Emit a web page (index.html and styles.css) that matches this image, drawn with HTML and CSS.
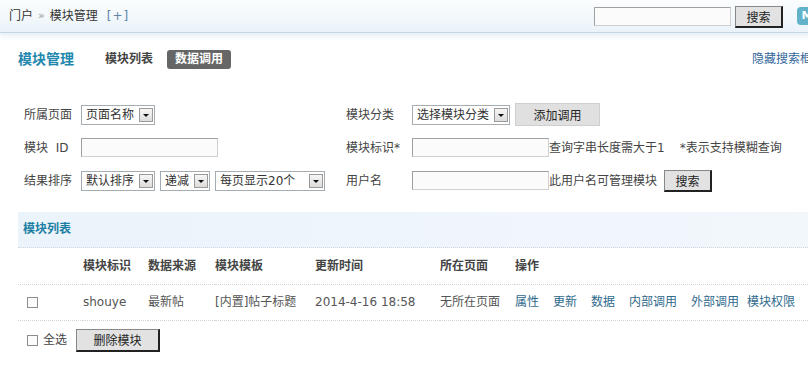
FILE: index.html
```html
<!DOCTYPE html>
<html lang="zh">
<head>
    <meta charset="UTF-8">
    <meta name="viewport" content="width=device-width, initial-scale=1.0">
    <title>模块管理</title>
    <link rel="stylesheet" href="styles.css">
</head>
<body>
    <!-- 顶部导航条 -->
    <div class="topbar">
        <div class="crumb">
            <a href="#">门户</a><em>&raquo;</em><a href="#">模块管理</a><span class="add">[+]</span>
        </div>
        <div class="top-search">
            <input type="text" class="text top-input">
            <button class="btn btn-dark">搜索</button>
            <span class="top-icon">M</span>
        </div>
    </div>

    <div class="main">
        <!-- 标题和标签 -->
        <div class="title-row">
            <h1>模块管理</h1>
            <a class="tab" href="#">模块列表</a>
            <a class="tab current" href="#">数据调用</a>
            <a class="toggle" href="#">隐藏搜索框</a>
        </div>

        <!-- 搜索表单 -->
        <div class="search-form">
            <div class="label">所属页面</div>
            <div class="field">
                <span class="sel w74"><select><option>页面名称</option></select><i class="arrow"></i></span>
            </div>
            <div class="label label-r">模块分类</div>
            <div class="field">
                <span class="sel w98"><select><option>选择模块分类</option></select><i class="arrow"></i></span>
                <button class="btn btn-light">添加调用</button>
            </div>

            <div class="label">模块&nbsp; ID</div>
            <div class="field"><input type="text" class="text"></div>
            <div class="label label-r">模块标识*</div>
            <div class="field">
                <input type="text" class="text"><span class="tip">查询字串长度需大于1</span><span class="hint">*表示支持模糊查询</span>
            </div>

            <div class="label">结果排序</div>
            <div class="field">
                <span class="sel w74"><select><option>默认排序</option></select><i class="arrow"></i></span>
                <span class="sel w50"><select><option>递减</option></select><i class="arrow"></i></span>
                <span class="sel w110"><select><option>每页显示20个</option></select><i class="arrow"></i></span>
            </div>
            <div class="label label-r">用户名</div>
            <div class="field">
                <input type="text" class="text"><span class="tip">此用户名可管理模块</span>
                <button class="btn btn-dark">搜索</button>
            </div>
        </div>

        <!-- 模块列表 -->
        <div class="list-title">模块列表</div>
        <table class="list">
            <tr>
                <th class="c-check"></th>
                <th class="c-name">模块标识</th>
                <th class="c-src">数据来源</th>
                <th class="c-tpl">模块模板</th>
                <th class="c-time">更新时间</th>
                <th class="c-page">所在页面</th>
                <th>操作</th>
            </tr>
            <tr>
                <td class="c-check"><input type="checkbox" class="chk"></td>
                <td class="latin">shouye</td>
                <td>最新帖</td>
                <td>[内置]帖子标题</td>
                <td class="latin">2014-4-16 18:58</td>
                <td>无所在页面</td>
                <td class="ops">
                    <a href="#">属性</a><a href="#">更新</a><a href="#">数据</a><a href="#">内部调用</a><a href="#">外部调用</a><a href="#">模块权限</a>
                </td>
            </tr>
        </table>

        <div class="list-foot">
            <label class="all"><input type="checkbox" class="chk">全选</label>
            <button class="btn btn-dark btn-del">删除模块</button>
        </div>
    </div>
</body>
</html>
```

FILE: styles.css
```css
/* 基础样式 */
* {
    margin: 0;
    padding: 0;
    box-sizing: border-box;
}

body {
    font: 12px/1.5 "DejaVu Sans", "Noto Sans CJK SC", sans-serif;
    color: #444;
    background: #fff;
    overflow: hidden;
}

a {
    text-decoration: none;
    color: #336699;
}

/* 顶部导航条 */
.topbar {
    width: 826px;
    height: 33px;
    padding: 0 9px;
    display: flex;
    align-items: center;
    background: linear-gradient(#fbfdfe, #ebf3f9);
    border-bottom: 1px solid #c3d6e4;
    box-shadow: 0 3px 6px rgba(205, 222, 236, 0.55);
}

.crumb {
    display: flex;
    align-items: center;
    color: #333;
}

.crumb a {
    color: #333;
}

.crumb em {
    font-style: normal;
    color: #999;
    font-size: 11px;
    margin: 0 5px 0 5px;
}

.crumb .add {
    margin-left: 9px;
    color: #6283a6;
    font-family: "DejaVu Sans", sans-serif;
    letter-spacing: 1px;
}

.top-search {
    margin-left: auto;
    display: flex;
    align-items: center;
}

.top-input {
    width: 136px;
    height: 18px;
    background: #f7f7f7;
}

.top-search .btn {
    margin-left: 4px;
    width: 48px;
    height: 22px;
    margin-top: 1px;
}

.top-icon {
    margin-left: 14px;
    width: 20px;
    height: 18px;
    border-radius: 4px;
    background: #62b3c9;
    color: #fff;
    font-weight: bold;
    font-size: 11px;
    line-height: 18px;
    text-align: center;
}

/* 主区域 */
.main {
    width: 830px;
    padding: 0 18px;
}

.title-row {
    height: 20px;
    margin-top: 16px;
    display: flex;
    align-items: center;
}

.title-row h1 {
    font-size: 14px;
    font-weight: bold;
    color: #2187ad;
    line-height: 20px;
}

.tab {
    color: #444;
    font-weight: bold;
    line-height: 19px;
}

.title-row h1 + .tab {
    margin-left: 31px;
}

.tab.current {
    margin-left: 14px;
    padding: 0 8px;
    background: #666;
    color: #fff;
    border-radius: 3px;
}

.toggle {
    margin-left: auto;
    color: #336699;
}

/* 搜索表单 */
.search-form {
    margin-top: 29px;
    display: grid;
    grid-template-columns: 63px 265px 66px 1fr;
    grid-auto-rows: 33px;
}

.search-form .label {
    padding-left: 6px;
    display: flex;
    align-items: center;
    color: #444;
}

.search-form .label-r {
    padding-left: 0;
}

.search-form .field {
    display: flex;
    align-items: center;
    white-space: nowrap;
}

.text {
    width: 137px;
    height: 19px;
    border: 1px solid;
    border-color: #a0a0a0 #d0d0d0 #d0d0d0 #a0a0a0;
    background: #fbfbfb;
    outline: none;
}

.tip {
    color: #444;
}

.hint {
    margin-left: 15px;
    color: #444;
}

/* 下拉框 */
.sel {
    position: relative;
    display: inline-block;
    height: 20px;
    margin-right: 5px;
}

.sel select {
    appearance: none;
    -webkit-appearance: none;
    width: 100%;
    height: 20px;
    padding-left: 4px;
    border: 1px solid #a5acb2;
    background: #fff;
    font: 12px "DejaVu Sans", "Noto Sans CJK SC", sans-serif;
    color: #333;
    outline: none;
}

.sel .arrow {
    position: absolute;
    right: 2px;
    top: 3px;
    width: 14px;
    height: 14px;
    border: 1px solid #9a9a9a;
    background: linear-gradient(#f6f6f6, #dcdcdc);
    pointer-events: none;
}

.sel .arrow::after {
    content: "";
    position: absolute;
    left: 3px;
    top: 5px;
    border-left: 3px solid transparent;
    border-right: 3px solid transparent;
    border-top: 3px solid #111;
}

.w74 { width: 74px; }
.w98 { width: 98px; }
.w50 { width: 50px; }
.w110 { width: 110px; }

/* 按钮 */
.btn {
    font: 12px "DejaVu Sans", "Noto Sans CJK SC", sans-serif;
    color: #222;
    cursor: pointer;
}

.btn-dark {
    background: #e2e2e2;
    border: 1px solid;
    border-width: 1px 2px 2px 1px;
    border-color: #888 #222 #222 #888;
}

.btn-light {
    width: 85px;
    height: 23px;
    background: #e0e0e0;
    border: 1px solid #cfcfcf;
}

.field .btn-dark {
    margin-left: 7px;
    width: 48px;
    height: 22px;
}

/* 模块列表 */
.list-title {
    margin-top: 15px;
    height: 36px;
    padding-left: 5px;
    line-height: 35px;
    font-weight: bold;
    color: #1d7fa3;
    background: linear-gradient(90deg, #ebf3fb, #f2f7fc);
    border-bottom: 1px dotted #cfd8e0;
}

.list {
    width: 100%;
    border-collapse: collapse;
}

.list th,
.list td {
    height: 36px;
    text-align: left;
    vertical-align: middle;
    border-bottom: 1px dotted #d4d4d4;
    white-space: nowrap;
}

.list th {
    font-weight: bold;
    color: #444;
}

.list td {
    color: #555;
}

.list .latin {
    font-family: "DejaVu Sans", sans-serif;
}

.c-check { width: 65px; padding-left: 9px; }
.c-name { width: 65px; }
.c-src { width: 67px; }
.c-tpl { width: 100px; }
.c-time { width: 125px; }
.c-page { width: 75px; }

.ops a {
    margin-right: 14px;
    color: #2f6a8c;
}

.ops a:nth-child(5) {
    margin-right: 8px;
}

.chk {
    appearance: none;
    -webkit-appearance: none;
    width: 11px;
    height: 11px;
    border: 1px solid #8d8d8d;
    background: #fbfbfb;
    vertical-align: middle;
}

.list-foot {
    margin-top: 8px;
    display: flex;
    align-items: center;
}

.all {
    padding-left: 9px;
    display: flex;
    align-items: center;
    color: #444;
}

.all .chk {
    margin-right: 5px;
}

.btn-del {
    margin-left: 9px;
    width: 84px;
    height: 23px;
}
```
